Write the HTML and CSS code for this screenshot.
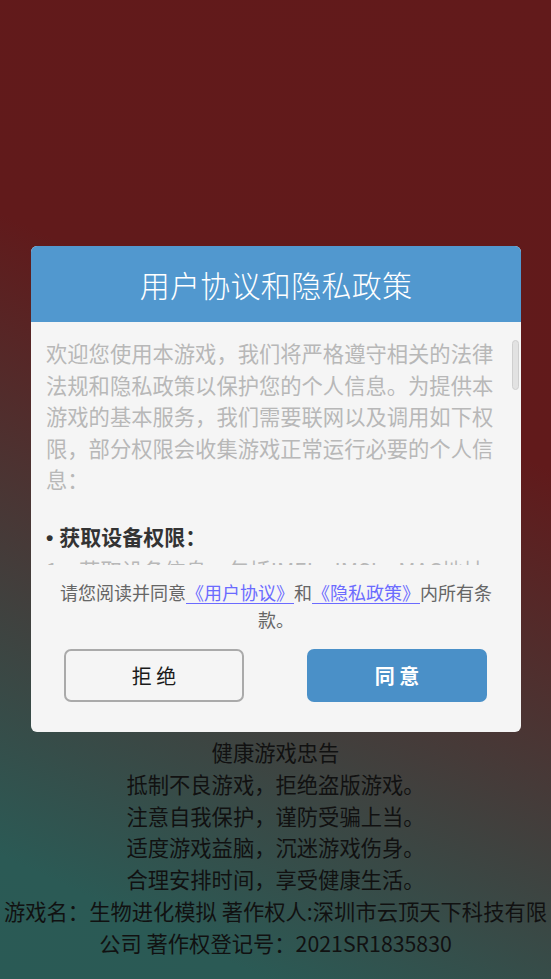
FILE: index.html
```html
<!DOCTYPE html>
<html lang="zh-CN">
<head>
<meta charset="utf-8">
<title>用户协议和隐私政策</title>
<link rel="stylesheet" href="styles.css">
</head>
<body>
<div class="page">
  <div class="dialog">
    <div class="dialog-header">用户协议和隐私政策</div>
    <div class="scroll">
      <div class="scroll-content">
        <p class="para">欢迎您使用本游戏，我们将严格遵守相关的法律法规和隐私政策以保护您的个人信息。为提供本游戏的基本服务，我们需要联网以及调用如下权限，部分权限会收集游戏正常运行必要的个人信息：</p>
        <p class="heading"><span class="bullet">• </span>获取设备权限：</p>
        <p class="para">1、获取设备信息：包括IMEI、IMSI、MAC地址等设备标识信息，用于统计分析和保障游戏安全。</p>
      </div>
      <div class="scrollbar"></div>
    </div>
    <p class="consent">请您阅读并同意<a class="link" href="#">《用户协议》</a>和<a class="link" href="#">《隐私政策》</a>内所有条款。</p>
    <div class="actions">
      <button class="btn btn-reject">拒 绝</button>
      <button class="btn btn-agree">同 意</button>
    </div>
  </div>
  <div class="notice">
    <p>健康游戏忠告</p>
    <p>抵制不良游戏，拒绝盗版游戏。</p>
    <p>注意自我保护，谨防受骗上当。</p>
    <p>适度游戏益脑，沉迷游戏伤身。</p>
    <p>合理安排时间，享受健康生活。</p>
    <p>游戏名：生物进化模拟 著作权人:深圳市云顶天下科技有限公司 著作权登记号：2021SR1835830</p>
  </div>
</div>
</body>
</html>
```
FILE: styles.css
```css
* { box-sizing: border-box; }
html, body {
  margin: 0;
  padding: 0;
  height: 100%;
}
body {
  font-family: "Noto Sans CJK SC", "Noto Sans", sans-serif;
  background: linear-gradient(205deg, #621a1b 0%, #611a1b 38%, #2b5a55 90%, #2a5a55 100%);
  min-height: 979px;
  overflow: hidden;
}
p { margin: 0; }
.page {
  display: flex;
  flex-direction: column;
  align-items: center;
  padding-top: 246px;
}
.dialog {
  width: 490px;
  background: #f5f5f5;
  border-radius: 6px;
  position: relative;
  margin-left: 1px;
}
.dialog-header {
  height: 76px;
  background: #5198cf;
  border-radius: 6px 6px 0 0;
  color: #fff;
  font-size: 30px;
  font-weight: 300;
  display: flex;
  align-items: center;
  justify-content: center;
  letter-spacing: 0.3px;
}
.scroll {
  height: 243px;
  overflow: hidden;
  position: relative;
}
.scroll-content {
  padding: 15px 22px 0 15px;
  font-size: 21.3px;
  line-height: 31.6px;
  color: #b8b8b8;
}
.scroll-content .heading {
  margin-top: 26px;
  color: #333;
  font-weight: bold;
  font-size: 21px;
}
.bullet {
  font-family: "Liberation Sans", sans-serif;
  font-weight: bold;
}
.scrollbar {
  position: absolute;
  left: 481px;
  top: 18px;
  width: 7px;
  height: 50px;
  background: #e2e2e2;
  border: 1px solid #cfcfcf;
  border-radius: 4px;
}
.consent {
  padding: 14px 24px 0;
  font-size: 18px;
  line-height: 27px;
  color: #666;
  text-align: center;
}
.link {
  color: #6b6bff;
  text-decoration: underline;
  text-underline-offset: 3px;
}
.actions {
  display: flex;
  justify-content: space-between;
  padding: 16px 34px 30px 33px;
}
.btn {
  width: 180px;
  height: 53px;
  border-radius: 7px;
  font-family: "Noto Sans CJK SC", "Noto Sans", sans-serif;
  font-size: 20px;
  cursor: pointer;
}
.btn-reject {
  background: #f5f5f5;
  border: 2px solid #aaaaaa;
  color: #1a1a1a;
}
.btn-agree {
  background: #4a90c8;
  border: none;
  color: #fff;
  font-weight: bold;
}
.notice {
  width: 551px;
  text-align: center;
  font-size: 21.3px;
  line-height: 31.8px;
  color: #111;
  padding-top: 4px;
}
```
